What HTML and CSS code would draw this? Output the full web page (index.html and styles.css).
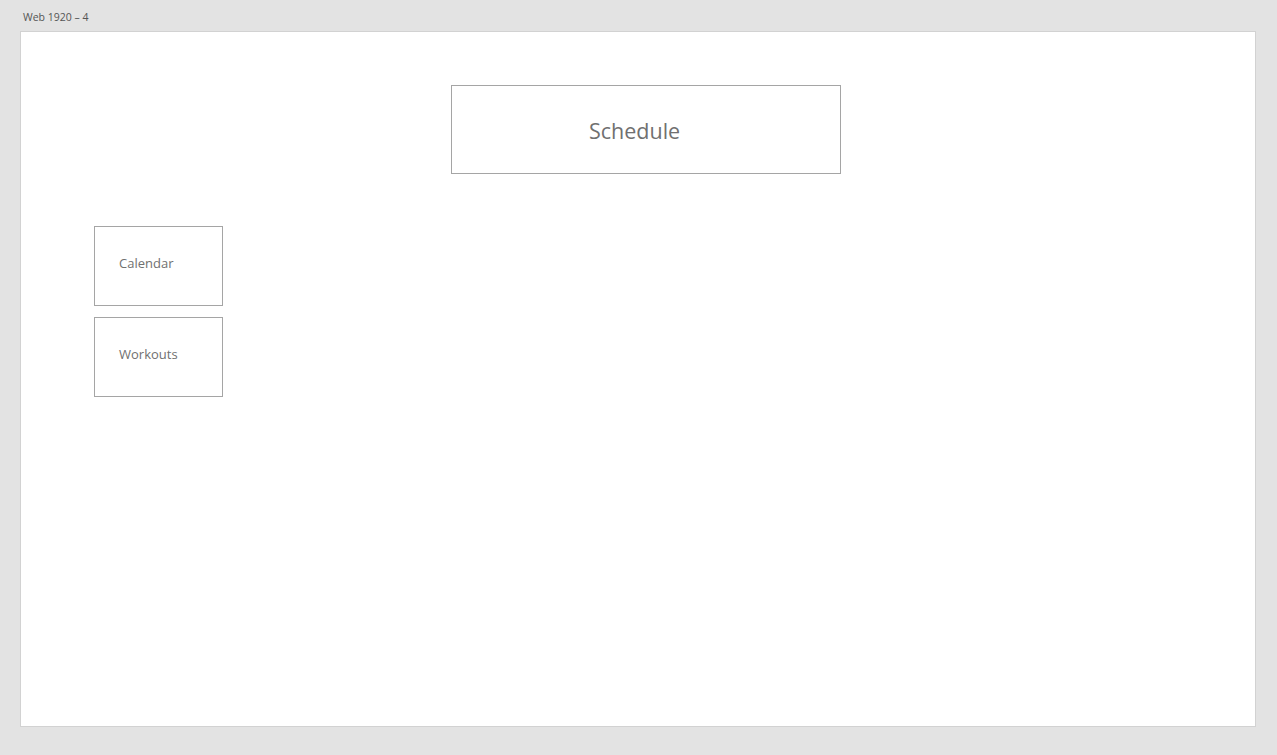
FILE: index.html
```html
<!DOCTYPE html>
<html>
<head>
<meta charset="utf-8">
<link rel="stylesheet" href="styles.css">
</head>
<body>
  <div class="label">Web 1920 – 4</div>
  <div class="artboard">
    <div class="title-box">Schedule</div>
    <div class="nav">
      <div class="nav-box">Calendar</div>
      <div class="nav-box">Workouts</div>
    </div>
  </div>
</body>
</html>
```
FILE: styles.css
```css
html, body {
  margin: 0;
  padding: 0;
}
body {
  background: #e3e3e3;
  width: 1277px;
  height: 755px;
  overflow: hidden;
  font-family: "Open Sans", "Noto Sans", sans-serif;
  color: #707070;
}
.label {
  height: 31px;
  box-sizing: border-box;
  padding: 10px 0 0 23px;
  font-size: 10.5px;
  line-height: 14px;
  color: #555;
}
.artboard {
  margin-left: 20px;
  width: 1236px;
  height: 696px;
  box-sizing: border-box;
  background: #fff;
  border: 1px solid #d2d2d2;
  padding: 53px 0 0 0;
  display: flex;
  flex-direction: column;
}
.title-box {
  margin-left: 430px;
  width: 390px;
  height: 89px;
  box-sizing: border-box;
  border: 1px solid #a5a5a5;
  display: flex;
  align-items: center;
  padding: 2px 0 0 137px;
  font-size: 21.5px;
  color: #707070;
}
.nav {
  margin: 52px 0 0 73px;
  display: flex;
  flex-direction: column;
  gap: 11px;
}
.nav-box {
  width: 129px;
  height: 80px;
  box-sizing: border-box;
  border: 1px solid #a5a5a5;
  display: flex;
  align-items: center;
  padding: 0 0 7px 24px;
  font-size: 13px;
  color: #707070;
}
```
